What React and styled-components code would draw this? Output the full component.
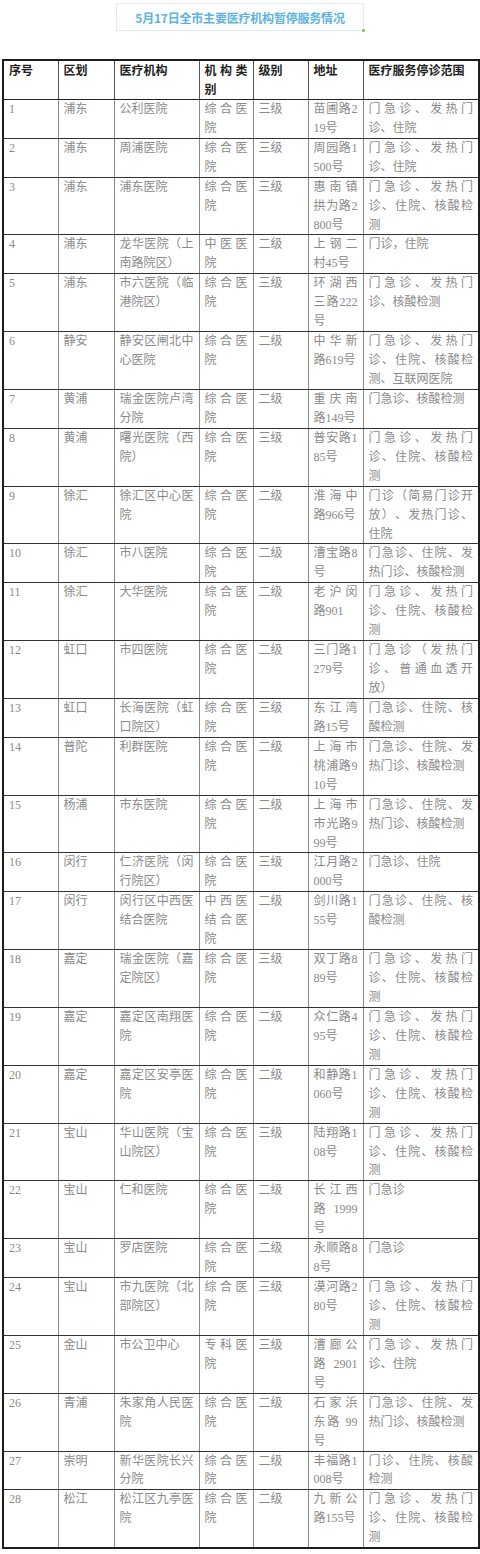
import React from 'react';
import styled, { createGlobalStyle } from 'styled-components';

const GlobalStyle = createGlobalStyle`
  html, body {
    margin: 0;
    padding: 0;
    background: #fff;
  }
  body {
    font-family: "Liberation Serif", "Noto Sans CJK SC", serif;
  }
`;

const Page = styled.div`
  width: 480px;
  padding-top: 3px;
  display: flex;
  flex-direction: column;
  align-items: center;
`;

const TitleBox = styled.div`
  position: relative;
  width: 246px;
  height: 26px;
  border: 1px solid #e2ebef;
  background: linear-gradient(#ffffff, #fbfdfe);
  display: flex;
  align-items: center;
  justify-content: center;
`;

const TitleText = styled.span`
  font-family: "Noto Sans CJK SC", sans-serif;
  font-size: 12px;
  font-weight: 700;
  color: #5fb3dc;
  letter-spacing: -0.2px;
`;

const Marker = styled.span`
  position: absolute;
  right: -2px;
  bottom: -2px;
  width: 3px;
  height: 3px;
  background: #9fc46a;
`;

const Table = styled.table`
  margin-top: 28px;
  align-self: flex-start;
  margin-left: 2px;
  width: 476px;
  table-layout: fixed;
  border-collapse: collapse;
  border: 2px solid #1e1e1e;
`;

const HeadCell = styled.th`
  font-family: "Noto Sans CJK SC", sans-serif;
  font-size: 12px;
  font-weight: 600;
  line-height: 18.94px;
  color: #222;
  text-align: justify;
  vertical-align: top;
  padding: 0 5px;
  border-left: 1px solid #555;
  border-right: 1px solid #555;
  border-bottom: 1px solid #222;
  word-break: break-all;
  text-spacing-trim: space-all;
`;

const Cell = styled.td`
  font-size: 12px;
  line-height: 18.94px;
  color: #8a8a8a;
  text-align: justify;
  vertical-align: top;
  padding: 0 5px;
  border-left: 1px solid ${(p) => (p.$strong ? '#333' : '#888')};
  border-right: 1px solid ${(p) => (p.$strong ? '#333' : '#888')};
  border-bottom: 1px solid #333;
  word-break: break-all;
  text-spacing-trim: space-all;
`;

const widths = [55, 56, 85, 54, 55, 55, 116];
const headers = ['序号', '区划', '医疗机构', '机构类别', '级别', '地址', '医疗服务停诊范围'];

const rows = [
  ['1', '浦东', '公利医院', '综合医院', '三级', '苗圃路219号', '门急诊、发热门诊、住院'],
  ['2', '浦东', '周浦医院', '综合医院', '三级', '周园路1500号', '门急诊、发热门诊、住院'],
  ['3', '浦东', '浦东医院', '综合医院', '三级', '惠南镇拱为路2800号', '门急诊、发热门诊、住院、核酸检测'],
  ['4', '浦东', '龙华医院（上南路院区）', '中医医院', '二级', '上钢二村45号', '门诊，住院'],
  ['5', '浦东', '市六医院（临港院区）', '综合医院', '三级', '环湖西三路222号', '门急诊、发热门诊、核酸检测'],
  ['6', '静安', '静安区闸北中心医院', '综合医院', '二级', '中华新路619号', '门急诊、发热门诊、住院、核酸检测、互联网医院'],
  ['7', '黄浦', '瑞金医院卢湾分院', '综合医院', '二级', '重庆南路149号', '门急诊、核酸检测'],
  ['8', '黄浦', '曙光医院（西院）', '综合医院', '三级', '普安路185号', '门急诊、发热门诊、住院、核酸检测'],
  ['9', '徐汇', '徐汇区中心医院', '综合医院', '二级', '淮海中路966号', '门诊（简易门诊开放）、发热门诊、住院'],
  ['10', '徐汇', '市八医院', '综合医院', '二级', '漕宝路8号', '门急诊、住院、发热门诊、核酸检测'],
  ['11', '徐汇', '大华医院', '综合医院', '二级', '老沪闵路901', '门急诊、发热门诊、住院、核酸检测'],
  ['12', '虹口', '市四医院', '综合医院', '二级', '三门路1279号', '门急诊（发热门诊、普通血透开放）'],
  ['13', '虹口', '长海医院（虹口院区）', '综合医院', '三级', '东江湾路15号', '门急诊、住院、核酸检测'],
  ['14', '普陀', '利群医院', '综合医院', '二级', '上海市桃浦路910号', '门急诊、住院、发热门诊、核酸检测'],
  ['15', '杨浦', '市东医院', '综合医院', '二级', '上海市市光路999号', '门急诊、住院、发热门诊、核酸检测'],
  ['16', '闵行', '仁济医院（闵行院区）', '综合医院', '三级', '江月路2000号', '门急诊、住院'],
  ['17', '闵行', '闵行区中西医结合医院', '中西医结合医院', '二级', '剑川路155号', '门急诊、住院、核酸检测'],
  ['18', '嘉定', '瑞金医院（嘉定院区）', '综合医院', '三级', '双丁路889号', '门急诊、发热门诊、住院、核酸检测'],
  ['19', '嘉定', '嘉定区南翔医院', '综合医院', '二级', '众仁路495号', '门急诊、发热门诊、住院、核酸检测'],
  ['20', '嘉定', '嘉定区安亭医院', '综合医院', '二级', '和静路1060号', '门急诊、发热门诊、住院、核酸检测'],
  ['21', '宝山', '华山医院（宝山院区）', '综合医院', '三级', '陆翔路108号', '门急诊、发热门诊、住院、核酸检测'],
  ['22', '宝山', '仁和医院', '综合医院', '二级', '长江西路 1999号', '门急诊'],
  ['23', '宝山', '罗店医院', '综合医院', '二级', '永顺路88号', '门急诊'],
  ['24', '宝山', '市九医院（北部院区）', '综合医院', '三级', '漠河路280号', '门急诊、发热门诊、住院、核酸检测'],
  ['25', '金山', '市公卫中心', '专科医院', '三级', '漕廊公路 2901号', '门急诊、发热门诊、住院'],
  ['26', '青浦', '朱家角人民医院', '综合医院', '二级', '石家浜东路 99号', '门急诊、住院、发热门诊、核酸检测'],
  ['27', '崇明', '新华医院长兴分院', '综合医院', '二级', '丰福路1008号', '门诊、住院、核酸检测'],
  ['28', '松江', '松江区九亭医院', '综合医院', '二级', '九新公路155号', '门急诊、发热门诊、住院、核酸检测'],
];

export default function App() {
  return (
    <>
      <GlobalStyle />
      <Page>
        <TitleBox>
          <TitleText>5月17日全市主要医疗机构暂停服务情况</TitleText>
          <Marker />
        </TitleBox>
        <Table>
          <colgroup>
            {widths.map((w, i) => (
              <col key={i} style={{ width: w }} />
            ))}
          </colgroup>
          <thead>
            <tr>
              {headers.map((h) => (
                <HeadCell key={h}>{h}</HeadCell>
              ))}
            </tr>
          </thead>
          <tbody>
            {rows.map((r) => (
              <tr key={r[0]}>
                {r.map((c, i) => (
                  <Cell key={i} $strong={i === 6}>
                    {c}
                  </Cell>
                ))}
              </tr>
            ))}
          </tbody>
        </Table>
      </Page>
    </>
  );
}
